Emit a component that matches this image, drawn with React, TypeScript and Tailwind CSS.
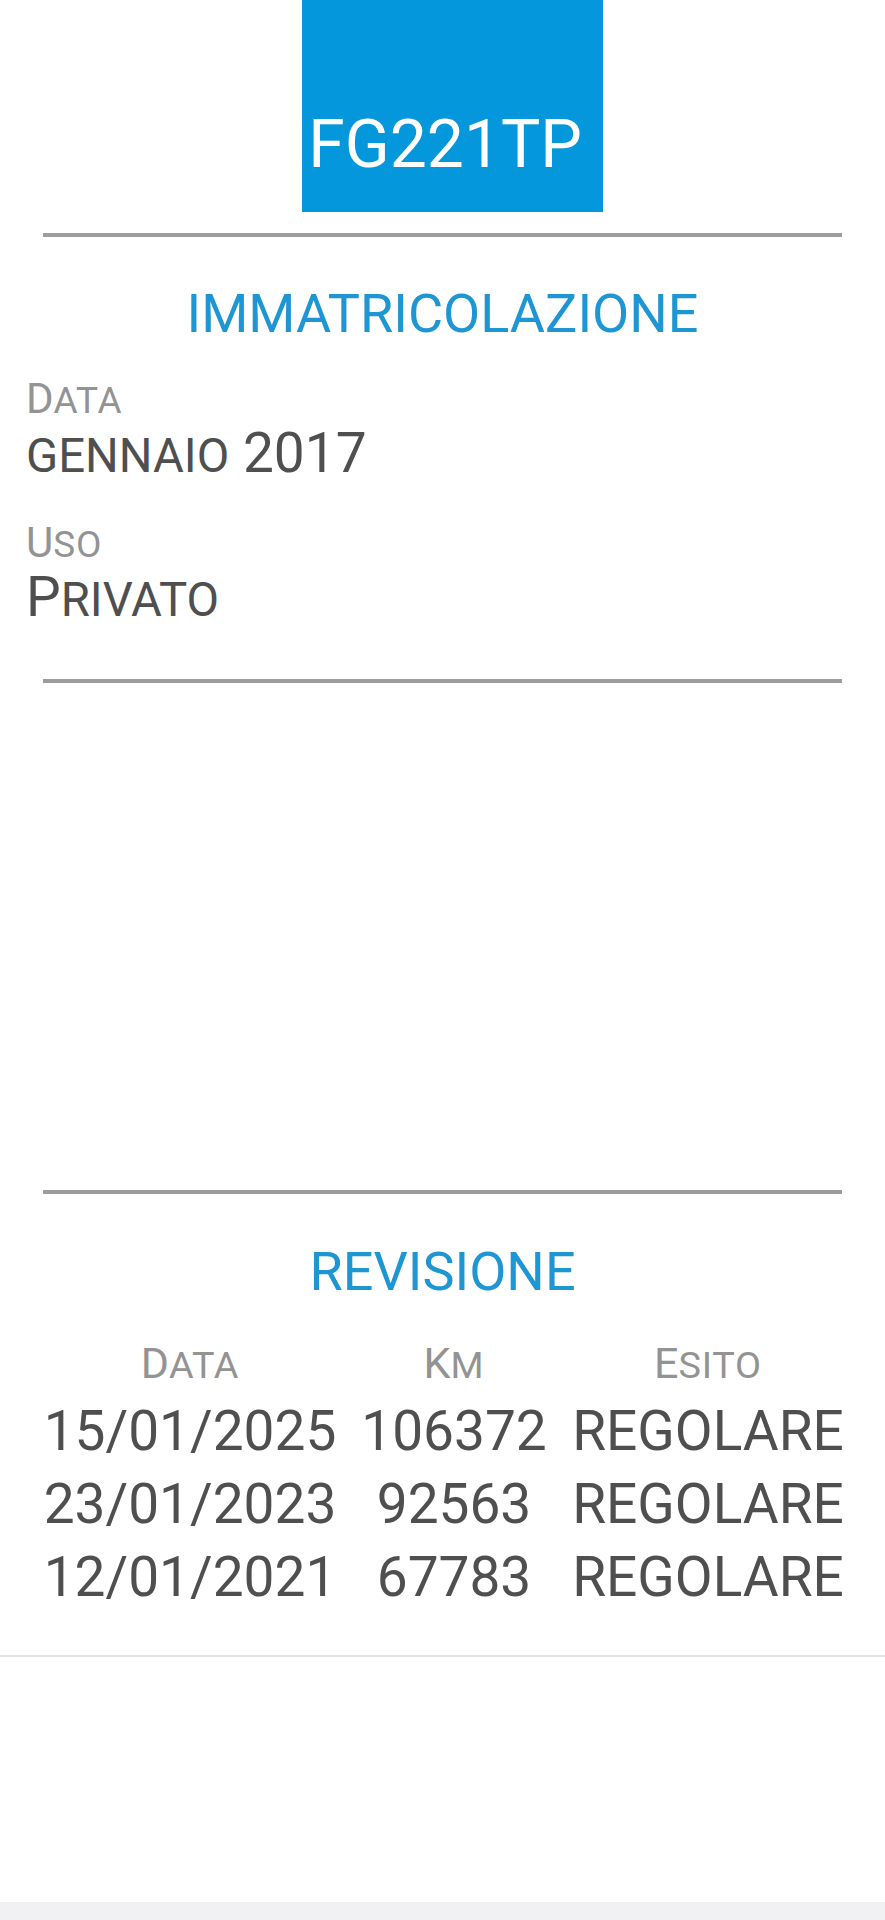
import type React from "react"

const font = { fontFamily: "Roboto, 'Noto Sans', sans-serif" }

// lowercase letters get drawn as small capitals, the rest stays full size
const SmallCaps: React.FC<{ text: string; label?: boolean }> = ({ text, label }) => {
  const parts: { small: boolean; s: string }[] = []
  for (const ch of text) {
    const small = ch !== ch.toUpperCase()
    const last = parts[parts.length - 1]
    if (last && last.small === small) last.s += small ? ch.toUpperCase() : ch
    else parts.push({ small, s: small ? ch.toUpperCase() : ch })
  }
  return (
    <>
      {parts.map((p, i) =>
        p.small ? (
          <span key={i} className={label ? "text-[0.88em] tracking-[0.02em]" : "text-[0.86em]"}>
            {p.s}
          </span>
        ) : (
          <span key={i}>{p.s}</span>
        ),
      )}
    </>
  )
}

const Rule = ({ className = "" }: { className?: string }) => (
  <div className={`mx-[43px] h-[4px] bg-[#9d9d9d] ${className}`} />
)

const revisioni = [
  { data: "15/01/2025", km: "106372", esito: "REGOLARE" },
  { data: "23/01/2023", km: "92563", esito: "REGOLARE" },
  { data: "12/01/2021", km: "67783", esito: "REGOLARE" },
]

export default function App() {
  return (
    <div className="min-h-[1920px] w-full bg-white flex flex-col" style={font}>
      {/* targa */}
      <div className="ml-[302px] w-[301px] h-[212px] bg-[#0597db] overflow-hidden flex items-end justify-end pr-[21px] pb-[34px]">
        <span className="text-white text-[66px] leading-none whitespace-nowrap">FG221TP</span>
      </div>

      <Rule className="mt-[21px]" />

      <div className="mt-[50px] text-center text-[54px] leading-none text-[#1e96d3]">IMMATRICOLAZIONE</div>

      <div className="pl-[26px]">
        <div className="mt-[37px] text-[42px] leading-none text-[#939393]">
          <SmallCaps text="Data" label />
        </div>
        <div className="mt-[6px] text-[55px] leading-none text-[#4f4f4f]">
          <SmallCaps text="gennaio 2017" />
        </div>
        <div className="mt-[41px] text-[42px] leading-none text-[#939393]">
          <SmallCaps text="Uso" label />
        </div>
        <div className="mt-[6px] text-[55px] leading-none text-[#4f4f4f]">
          <SmallCaps text="Privato" />
        </div>
      </div>

      <Rule className="mt-[54px]" />

      <Rule className="mt-[507px]" />

      <div className="mt-[51px] text-center text-[54px] leading-none text-[#1e96d3]">REVISIONE</div>

      <div className="pl-[40px] grid grid-cols-[300px_220px_280px] gap-x-[4px] text-center">
        <div className="mt-[43px] text-[43px] leading-none text-[#939393]">
          <SmallCaps text="Data" label />
        </div>
        <div className="mt-[43px] text-[43px] leading-none text-[#939393]">
          <SmallCaps text="Km" label />
        </div>
        <div className="mt-[43px] text-[43px] leading-none text-[#939393]">
          <SmallCaps text="Esito" label />
        </div>
        {revisioni.map((r, i) => (
          <div key={r.data} className="contents">
            <div className={`${i === 0 ? "mt-[19px]" : "mt-[18px]"} text-[55px] leading-none text-[#4f4f4f] whitespace-nowrap`}>
              {r.data}
            </div>
            <div className={`${i === 0 ? "mt-[19px]" : "mt-[18px]"} text-[55px] leading-none text-[#4f4f4f]`}>{r.km}</div>
            <div className={`${i === 0 ? "mt-[19px]" : "mt-[18px]"} text-[55px] leading-none text-[#4f4f4f]`}>{r.esito}</div>
          </div>
        ))}
      </div>

      <div className="mt-[50px] h-[2px] bg-[#e2e2e2]" />
      <div className="flex-1" />
      <div className="h-[18px] bg-[#f1f1f3]" />
    </div>
  )
}
